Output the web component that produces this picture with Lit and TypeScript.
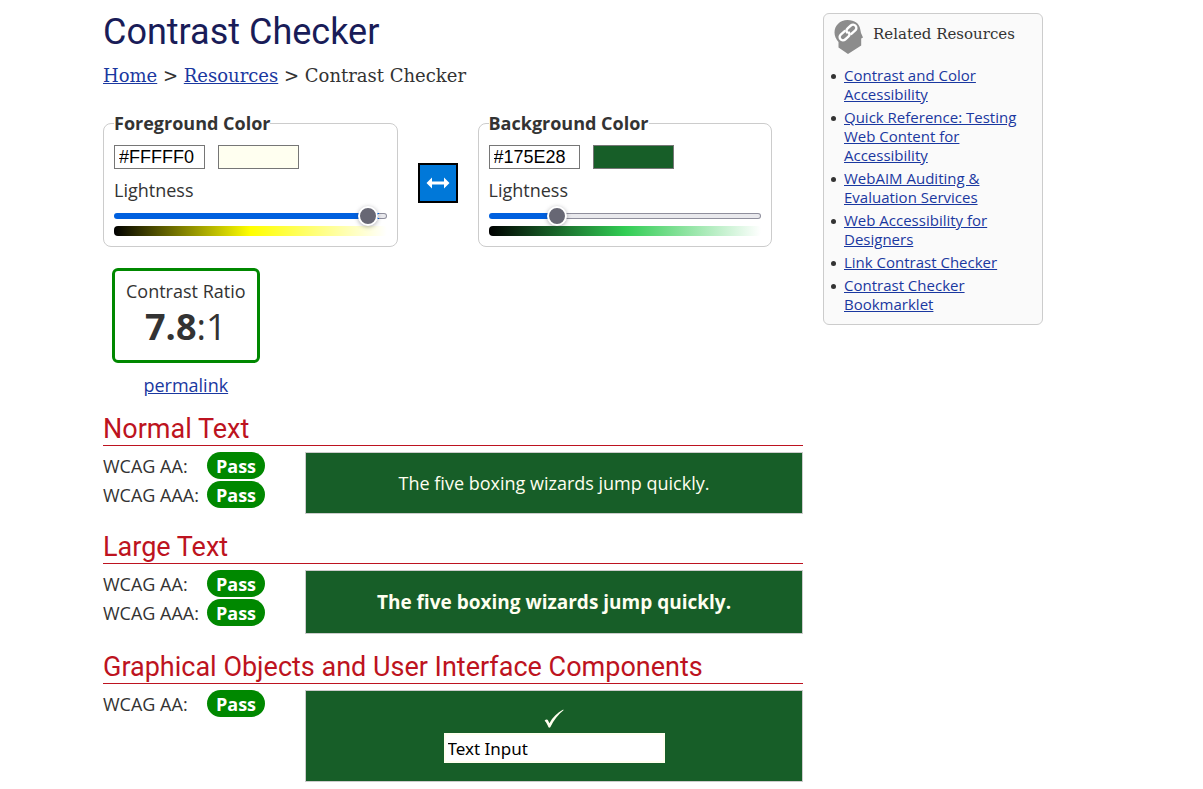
import { LitElement, html, css } from "lit";
import { customElement, property, state } from "lit/decorators.js";

const SAMPLE = "The five boxing wizards jump quickly.";

@customElement("color-panel")
class ColorPanel extends LitElement {
  @property() heading = "";
  @property() color = "#000000";
  @property() hue = "#808080";
  @property({ type: Number }) lightness = 50;

  static styles = css`
    :host {
      display: block;
      flex: 1;
      min-width: 0;
    }
    .panel {
      margin: 0;
      min-width: 0;
      padding: 10px;
      border: 1px solid #ccc;
      border-radius: 8px;
    }
    .legend {
      padding: 0;
      font-weight: 700;
      line-height: 24px;
    }
    .inputs {
      display: flex;
      gap: 13px;
    }
    .hex,
    .swatch {
      box-sizing: border-box;
      height: 24px;
      border: 1px solid #767676;
      border-radius: 0;
      background: #fff;
    }
    .hex {
      width: 91px;
      padding: 0 4px;
      font: 18px "Liberation Sans", Arial, sans-serif;
      color: #000;
    }
    .swatch {
      appearance: none;
      width: 81px;
      padding: 0;
    }
    .swatch::-webkit-color-swatch-wrapper {
      padding: 0;
    }
    .swatch::-webkit-color-swatch {
      border: 0;
      border-radius: 0;
    }
    .label {
      display: block;
      margin: 9px 0 3px;
      line-height: 25px;
    }
    .range {
      appearance: none;
      display: block;
      width: 100%;
      height: 20px;
      margin: 0;
      background: none;
    }
    .range::-webkit-slider-runnable-track {
      box-sizing: border-box;
      height: 6px;
      border: 1px solid transparent;
      border-radius: 3px;
      background:
        linear-gradient(to right, #0060df var(--fill), #e9e9ed var(--fill)) padding-box,
        linear-gradient(to right, #0060df var(--fill), #8f8f9d var(--fill)) border-box;
    }
    .range::-webkit-slider-thumb {
      appearance: none;
      box-sizing: border-box;
      width: 20px;
      height: 20px;
      margin-top: -8px;
      border: 2px solid #fff;
      border-radius: 50%;
      background: #676774;
      box-shadow: 0 1px 4px rgba(58, 57, 68, 0.4);
    }
    .ramp {
      height: 10px;
      border-radius: 4px;
    }
  `;

  render() {
    return html`
      <fieldset class="panel">
        <legend class="legend">${this.heading}</legend>
        <div class="inputs">
          <input class="hex" type="text" aria-label="Hex value" .value=${this.color} />
          <input class="swatch" type="color" aria-label="Color picker" .value=${this.color.toLowerCase()} />
        </div>
        <label class="label" for="lightness">Lightness</label>
        <input
          class="range"
          id="lightness"
          type="range"
          min="0"
          max="100"
          .value=${String(this.lightness)}
          style="--fill: ${this.lightness}%"
          @input=${(e: Event) => (this.lightness = Number((e.target as HTMLInputElement).value))}
        />
        <div class="ramp" style="background: linear-gradient(to right, #000, ${this.hue}, #fff)"></div>
      </fieldset>
    `;
  }
}

@customElement("related-resources")
class RelatedResources extends LitElement {
  static styles = css`
    :host {
      display: block;
    }
    .box {
      padding: 5px 9px 10px 7px;
      border: 1px solid #ccc;
      border-radius: 6px;
      background: #fafafa;
    }
    .head {
      display: flex;
      align-items: flex-start;
      gap: 10px;
      padding-left: 3px;
    }
    .title {
      margin: 4px 0 0;
      font: 400 15px/22px "DejaVu Serif", serif;
    }
    .list {
      margin: 11px 0 0;
      padding: 0;
      list-style: none;
      font-size: 15px;
      line-height: 19px;
    }
    .item {
      display: flex;
      gap: 8px;
    }
    .item::before {
      content: "";
      flex: none;
      width: 5px;
      height: 5px;
      margin-top: 8px;
      border-radius: 50%;
      background: #333;
    }
    .item + .item {
      margin-top: 4px;
    }
    .link {
      color: #1a38a0;
    }
  `;

  render() {
    const links = [
      "Contrast and Color Accessibility",
      "Quick Reference: Testing Web Content for Accessibility",
      "WebAIM Auditing & Evaluation Services",
      "Web Accessibility for Designers",
      "Link Contrast Checker",
      "Contrast Checker Bookmarklet",
    ];
    return html`
      <aside class="box">
        <div class="head">
          <svg width="29" height="36" viewBox="0 0 29 36" aria-hidden="true">
            <path fill="#8c8c8c" d="M13.5 1C20.500 1 25.500 4.500 26.300 10.500L27 14L29 18.500L27.200 19.500V26.500L14 35L4.500 28.500V23C2 20 .5 17 .5 13.500C.5 6.500 6 1 13.500 1Z" />
            <g fill="none" stroke="#fff" stroke-width="2.400" stroke-linecap="round" transform="rotate(-42 14 13.500)">
              <path d="M12.500 10.200H7.200a3.300 3.300 0 0 0 0 6.600H11.500a3.300 3.300 0 0 0 3.200-2.600" />
              <path d="M15.500 16.800h5.300a3.300 3.300 0 0 0 0-6.600H16.500a3.300 3.300 0 0 0-3.200 2.600" />
            </g>
          </svg>
          <h2 class="title">Related Resources</h2>
        </div>
        <ul class="list">
          ${links.map((t) => html`<li class="item"><a class="link" href="#">${t}</a></li>`)}
        </ul>
      </aside>
    `;
  }
}

@customElement("app-root")
class AppRoot extends LitElement {
  @state() private foreground = "#FFFFF0";
  @state() private background = "#175E28";

  static styles = css`
    :host {
      display: block;
      font: 18px/25px "Open Sans", "Noto Sans", sans-serif;
      color: #333;
      background: #fff;
    }
    .page {
      display: grid;
      grid-template-columns: minmax(0, 1fr) 220px;
      align-items: start;
      gap: 20px;
      padding: 0 160px 0 103px;
    }
    .aside {
      margin-top: 13px;
    }
    .title {
      margin: 0;
      padding-top: 11px;
      font: 400 36px/42px Roboto, sans-serif;
      color: #191c58;
    }
    .crumbs {
      margin-top: 11px;
      font: 18px/24px "DejaVu Serif", serif;
    }
    .link {
      color: #1a38a0;
    }
    .colors {
      display: flex;
      align-items: center;
      gap: 20px;
      margin-top: 23px;
      padding-right: 31px;
    }
    .swap {
      display: grid;
      place-items: center;
      flex: none;
      width: 40px;
      height: 40px;
      margin: 8px 0 0;
      padding: 0;
      border: 2px solid #000;
      background: #0078d9;
    }
    .ratio {
      display: flex;
      flex-direction: column;
      align-items: center;
      gap: 12px;
      width: fit-content;
      margin: 21px 0 0 9px;
      line-height: 21px;
      text-align: center;
    }
    .ratio-box {
      padding: 10px 11px 8px;
      border: 3px solid #080;
      border-radius: 6px;
    }
    .ratio-value {
      font-size: 36px;
      line-height: 50px;
    }
    .section-title {
      margin: 18px 0 6px;
      border-bottom: 1px solid #bd1320;
      font: 400 27px/31px Roboto, sans-serif;
      color: #bd1320;
    }
    .result {
      display: flex;
    }
    .levels {
      display: grid;
      grid-template-columns: 104px 98px;
      grid-auto-rows: 27px;
      gap: 2px 0;
      margin: 0;
    }
    .level,
    .badge {
      padding-top: 2px;
      line-height: 25px;
      white-space: nowrap;
    }
    .badge {
      justify-self: start;
      margin: 0;
      padding-left: 9px;
      padding-right: 9px;
      border-radius: 14px;
      background: #080;
      color: #fff;
      font-weight: 700;
    }
    .sample {
      flex: 1;
      display: flex;
      flex-direction: column;
      align-items: center;
      padding: 18px;
      border: 1px solid #ccc;
      line-height: 24px;
    }
    .large {
      font-size: 19px;
      font-weight: 700;
      line-height: 26px;
    }
    .text-input {
      box-sizing: border-box;
      width: 221px;
      height: 30px;
      padding: 0 2px;
      border: 2px solid;
      background: #fff;
      color: #000;
      font: 17px "Noto Sans", sans-serif;
    }
  `;

  private swap() {
    [this.foreground, this.background] = [this.background, this.foreground];
  }

  private section(title: string, levels: string[], kind: string, content: unknown) {
    return html`
      <section>
        <h2 class="section-title">${title}</h2>
        <div class="result">
          <dl class="levels">
            ${levels.map((l) => html`<dt class="level">WCAG ${l}:</dt><dd class="badge">Pass</dd>`)}
          </dl>
          <div class="sample ${kind}" style="color: ${this.foreground}; background-color: ${this.background}">
            ${content}
          </div>
        </div>
      </section>
    `;
  }

  render() {
    return html`
      <div class="page">
        <main>
          <h1 class="title">Contrast Checker</h1>
          <nav class="crumbs">
            <a class="link" href="#">Home</a> &gt; <a class="link" href="#">Resources</a> &gt; Contrast Checker
          </nav>
          <div class="colors">
            <color-panel heading="Foreground Color" .color=${this.foreground} hue="#ffff00" lightness="97"></color-panel>
            <button class="swap" aria-label="Swap colors" @click=${this.swap}>
              <svg width="24" height="12" viewBox="0 0 24 12" aria-hidden="true">
                <path fill="#fff" d="M.5 6L6 .5V4.500H18V.5L23.500 6L18 11.500V7.500H6V11.500Z" />
              </svg>
            </button>
            <color-panel heading="Background Color" .color=${this.background} hue="#32cd54" lightness="23"></color-panel>
          </div>
          <div class="ratio">
            <div class="ratio-box">
              <div>Contrast Ratio</div>
              <div class="ratio-value"><b>7.8</b>:1</div>
            </div>
            <a class="link" href="#">permalink</a>
          </div>
          ${this.section("Normal Text", ["AA", "AAA"], "", SAMPLE)}
          ${this.section("Large Text", ["AA", "AAA"], "large", SAMPLE)}
          ${this.section("Graphical Objects and User Interface Components", ["AA"], "", html`
            <svg width="20" height="24" viewBox="0 0 20 24" role="img" aria-label="Check mark">
              <path fill="currentColor" d="M.6 11.800C1.700 10.400 3.400 10.200 4.100 11.400L5.400 14.300C8.600 8.600 13 3.800 19.300.6L19.500 1.200C14.500 5.200 9.800 11 6.300 18.200C5.700 18.800 4.900 18.900 4.500 18.200C3.600 16.400 2.300 13 .6 11.800Z" />
            </svg>
            <input class="text-input" type="text" aria-label="Text input sample" value="Text Input" style="border-color: ${this.foreground}" />
          `)}
        </main>
        <related-resources class="aside"></related-resources>
      </div>
    `;
  }
}
